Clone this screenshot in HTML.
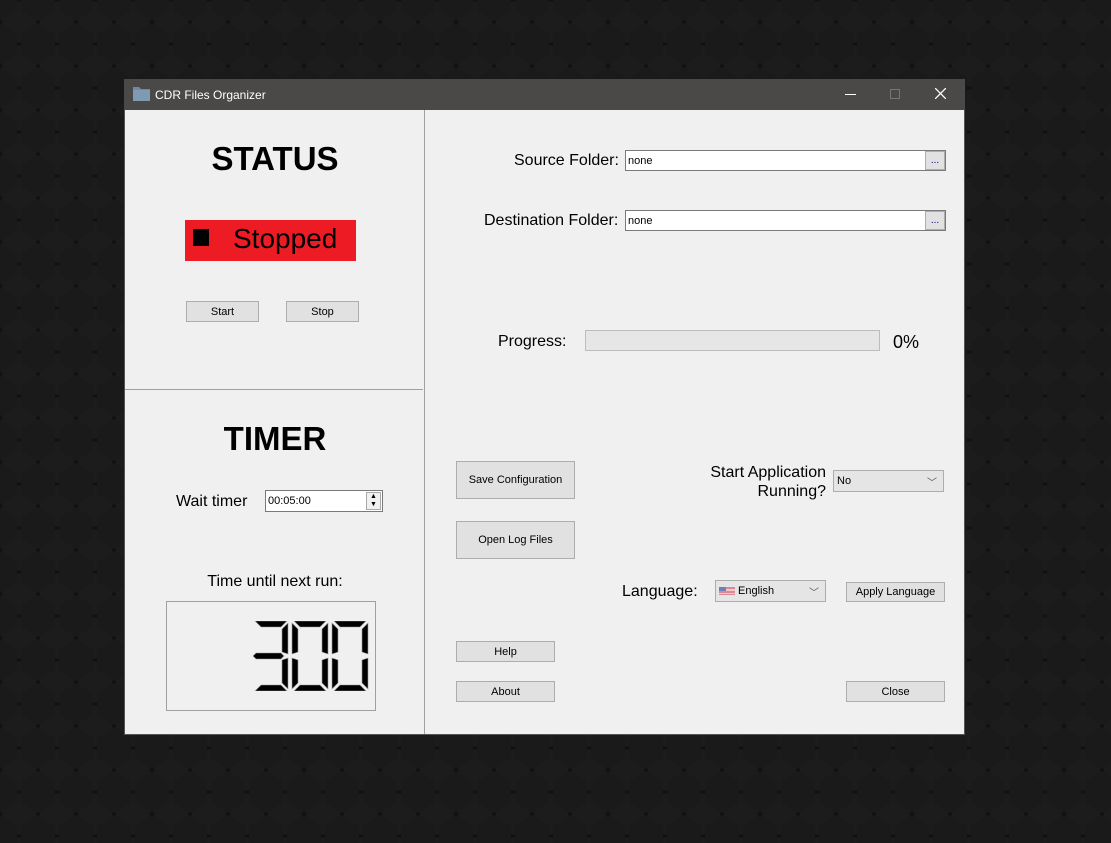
<!DOCTYPE html>
<html><head><meta charset="utf-8"><style>
*{margin:0;padding:0;box-sizing:border-box}
body{width:1111px;height:843px;overflow:hidden;background:#1b1b1b;font-family:"Liberation Sans",Arial,sans-serif;position:relative}
.a{position:absolute}
.btn{position:absolute;background:#e1e1e1;border:1px solid #adadad;font-size:11px;color:#000;display:flex;align-items:center;justify-content:center}
.lbl{position:absolute;font-size:16px;color:#000;white-space:nowrap}
.inp{position:absolute;background:#fff;border:1px solid #7a7a7a;font-size:11px;padding-left:2px;display:flex;align-items:center}
.combo{position:absolute;background:#e5e5e5;border:1px solid #adadad;font-size:11px;display:flex;align-items:center;padding-left:3px}
</style></head><body>
<svg class="a" style="left:0;top:0" width="1111" height="843">
<defs><pattern id="hx" width="38" height="44" patternUnits="userSpaceOnUse">
<rect width="38" height="44" fill="#111"/>
<polygon points="19,1 36,11 36,33 19,43 2,33 2,11" fill="#1c1c1c"/>
<polygon points="0,-21 17,-11 17,11 0,21 -17,11 -17,-11" fill="#1a1a1a"/>
<polygon points="38,-21 55,-11 55,11 38,21 21,11 21,-11" fill="#1a1a1a"/>
<polygon points="0,23 17,33 17,55 0,65 -17,55 -17,33" fill="#1a1a1a"/>
<polygon points="38,23 55,33 55,55 38,65 21,55 21,33" fill="#1a1a1a"/>
</pattern></defs>
<rect width="1111" height="843" fill="url(#hx)"/>
</svg>
<div class="a" style="left:124px;top:79px;width:841px;height:656px;background:#f0f0f0;border:1px solid #555"></div>
<div class="a" style="left:124px;top:79px;width:841px;height:31px;background:#4b4947"></div>
<svg class="a" style="left:133px;top:86px" width="17" height="15"><path d="M0 1h6l2 2h9v12H0z" fill="#6f8ba3"/><rect x="0" y="4" width="17" height="11" fill="#7f9bb3"/></svg>
<div class="a" style="left:155px;top:88px;font-size:12px;color:#fff">CDR Files Organizer</div>
<div class="a" style="left:845px;top:94px;width:11px;height:1px;background:#fff"></div>
<div class="a" style="left:890px;top:89px;width:10px;height:10px;border:1px solid #777"></div>
<svg class="a" style="left:935px;top:88px" width="11" height="11"><path d="M0 0L11 11M11 0L0 11" stroke="#fff" stroke-width="1.3"/></svg>
<div class="a" style="left:424px;top:110px;width:1px;height:624px;background:#a0a0a0"></div>
<div class="a" style="left:125px;top:389px;width:298px;height:1px;background:#a0a0a0"></div>
<div class="a" style="left:125px;top:140px;width:300px;text-align:center;font-size:33px;font-weight:bold">STATUS</div>
<div class="a" style="left:185px;top:220px;width:171px;height:41px;background:#ed1c24"></div>
<div class="a" style="left:193px;top:229px;width:16px;height:17px;background:#000"></div>
<div class="a" style="left:233px;top:223px;font-size:28px">Stopped</div>
<div class="btn" style="left:186px;top:301px;width:73px;height:21px">Start</div>
<div class="btn" style="left:286px;top:301px;width:73px;height:21px">Stop</div>
<div class="a" style="left:125px;top:420px;width:300px;text-align:center;font-size:33px;font-weight:bold">TIMER</div>
<div class="lbl" style="left:176px;top:493px">Wait timer</div>
<div class="inp" style="left:265px;top:490px;width:118px;height:22px">00:05:00</div>
<div class="a" style="left:366px;top:492px;width:15px;height:18px;border:1px solid #aaa;background:#f0f0f0;font-size:7px;line-height:8px;text-align:center">▲<br>▼</div>
<div class="lbl" style="left:125px;top:573px;width:300px;text-align:center">Time until next run:</div>
<div class="a" style="left:166px;top:601px;width:210px;height:110px;border:1px solid #a0a0a0"></div>
<svg class="a" style="left:252px;top:621px" width="120" height="70">
<g fill="#000" stroke="#999" stroke-width="0.6">
<g transform="translate(0,0)">
<polygon points="3,0 35,0 29,6 9,6"/><polygon points="36,2 36,33 30,31 30,8"/><polygon points="1,35 4,32 29,32 32,35 29,38 4,38"/><polygon points="36,37 36,68 30,62 30,39"/><polygon points="3,70 35,70 29,64 9,64"/></g>
<g transform="translate(40,0)">
<polygon points="2,0 34,0 28,6 8,6"/><polygon points="36,2 36,33 30,31 30,8"/><polygon points="0,2 6,8 6,31 0,33"/><polygon points="36,37 36,68 30,62 30,39"/><polygon points="0,37 6,39 6,62 0,68"/><polygon points="2,70 34,70 28,64 8,64"/></g>
<g transform="translate(80,0)">
<polygon points="2,0 34,0 28,6 8,6"/><polygon points="36,2 36,33 30,31 30,8"/><polygon points="0,2 6,8 6,31 0,33"/><polygon points="36,37 36,68 30,62 30,39"/><polygon points="0,37 6,39 6,62 0,68"/><polygon points="2,70 34,70 28,64 8,64"/></g>
</g></svg>
<div class="lbl" style="left:514px;top:152px">Source Folder:</div>
<div class="inp" style="left:625px;top:150px;width:321px;height:21px">none</div>
<div class="btn" style="left:925px;top:151px;width:20px;height:19px;font-size:10px;color:#00007a">...</div>
<div class="lbl" style="left:484px;top:212px">Destination Folder:</div>
<div class="inp" style="left:625px;top:210px;width:321px;height:21px">none</div>
<div class="btn" style="left:925px;top:211px;width:20px;height:19px;font-size:10px;color:#00007a">...</div>
<div class="lbl" style="left:498px;top:333px">Progress:</div>
<div class="a" style="left:585px;top:330px;width:295px;height:21px;background:#e6e6e6;border:1px solid #bcbcbc"></div>
<div class="lbl" style="left:893px;top:332px;font-size:18px">0%</div>
<div class="btn" style="left:456px;top:461px;width:119px;height:38px">Save Configuration</div>
<div class="btn" style="left:456px;top:521px;width:119px;height:38px">Open Log Files</div>
<div class="lbl" style="left:700px;top:463px;width:126px;text-align:right;line-height:19px">Start Application<br>Running?</div>
<div class="combo" style="left:833px;top:470px;width:111px;height:22px">No<span style="position:absolute;right:6px;top:3px;font-size:10px;color:#555">﹀</span></div>
<div class="lbl" style="left:622px;top:583px">Language:</div>
<div class="combo" style="left:715px;top:580px;width:111px;height:22px"><svg width="16" height="8" style="margin-right:3px"><rect width="16" height="8" fill="#d98a95"/><rect y="2" width="16" height="2" fill="#f0c8cc"/><rect y="6" width="16" height="1" fill="#f0c8cc"/><rect width="7" height="4" fill="#6f7fb8"/></svg>English<span style="position:absolute;right:6px;top:3px;font-size:10px;color:#555">﹀</span></div>
<div class="btn" style="left:846px;top:582px;width:99px;height:20px">Apply Language</div>
<div class="btn" style="left:456px;top:641px;width:99px;height:21px">Help</div>
<div class="btn" style="left:456px;top:681px;width:99px;height:21px">About</div>
<div class="btn" style="left:846px;top:681px;width:99px;height:21px">Close</div>
</body></html>
